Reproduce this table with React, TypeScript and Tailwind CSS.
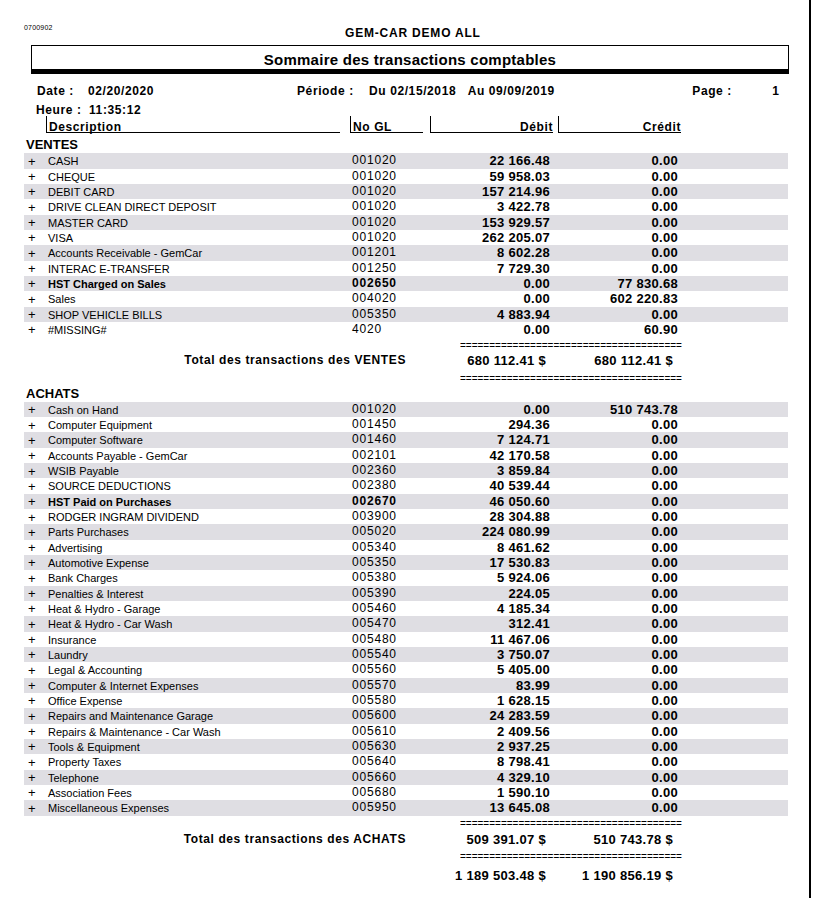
type Line = {
  desc: string;
  gl: string;
  debit: string;
  credit: string;
  bold?: boolean;
};

const ventes: Line[] = [
  { desc: 'CASH', gl: '001020', debit: '22 166.48', credit: '0.00' },
  { desc: 'CHEQUE', gl: '001020', debit: '59 958.03', credit: '0.00' },
  { desc: 'DEBIT CARD', gl: '001020', debit: '157 214.96', credit: '0.00' },
  { desc: 'DRIVE CLEAN DIRECT DEPOSIT', gl: '001020', debit: '3 422.78', credit: '0.00' },
  { desc: 'MASTER CARD', gl: '001020', debit: '153 929.57', credit: '0.00' },
  { desc: 'VISA', gl: '001020', debit: '262 205.07', credit: '0.00' },
  { desc: 'Accounts Receivable - GemCar', gl: '001201', debit: '8 602.28', credit: '0.00' },
  { desc: 'INTERAC E-TRANSFER', gl: '001250', debit: '7 729.30', credit: '0.00' },
  { desc: 'HST Charged on Sales', gl: '002650', debit: '0.00', credit: '77 830.68', bold: true },
  { desc: 'Sales', gl: '004020', debit: '0.00', credit: '602 220.83' },
  { desc: 'SHOP VEHICLE BILLS', gl: '005350', debit: '4 883.94', credit: '0.00' },
  { desc: '#MISSING#', gl: '4020', debit: '0.00', credit: '60.90' },
];

const achats: Line[] = [
  { desc: 'Cash on Hand', gl: '001020', debit: '0.00', credit: '510 743.78' },
  { desc: 'Computer Equipment', gl: '001450', debit: '294.36', credit: '0.00' },
  { desc: 'Computer Software', gl: '001460', debit: '7 124.71', credit: '0.00' },
  { desc: 'Accounts Payable - GemCar', gl: '002101', debit: '42 170.58', credit: '0.00' },
  { desc: 'WSIB Payable', gl: '002360', debit: '3 859.84', credit: '0.00' },
  { desc: 'SOURCE DEDUCTIONS', gl: '002380', debit: '40 539.44', credit: '0.00' },
  { desc: 'HST Paid on Purchases', gl: '002670', debit: '46 050.60', credit: '0.00', bold: true },
  { desc: 'RODGER INGRAM DIVIDEND', gl: '003900', debit: '28 304.88', credit: '0.00' },
  { desc: 'Parts Purchases', gl: '005020', debit: '224 080.99', credit: '0.00' },
  { desc: 'Advertising', gl: '005340', debit: '8 461.62', credit: '0.00' },
  { desc: 'Automotive Expense', gl: '005350', debit: '17 530.83', credit: '0.00' },
  { desc: 'Bank Charges', gl: '005380', debit: '5 924.06', credit: '0.00' },
  { desc: 'Penalties & Interest', gl: '005390', debit: '224.05', credit: '0.00' },
  { desc: 'Heat & Hydro - Garage', gl: '005460', debit: '4 185.34', credit: '0.00' },
  { desc: 'Heat & Hydro - Car Wash', gl: '005470', debit: '312.41', credit: '0.00' },
  { desc: 'Insurance', gl: '005480', debit: '11 467.06', credit: '0.00' },
  { desc: 'Laundry', gl: '005540', debit: '3 750.07', credit: '0.00' },
  { desc: 'Legal & Accounting', gl: '005560', debit: '5 405.00', credit: '0.00' },
  { desc: 'Computer & Internet Expenses', gl: '005570', debit: '83.99', credit: '0.00' },
  { desc: 'Office Expense', gl: '005580', debit: '1 628.15', credit: '0.00' },
  { desc: 'Repairs and Maintenance Garage', gl: '005600', debit: '24 283.59', credit: '0.00' },
  { desc: 'Repairs & Maintenance - Car Wash', gl: '005610', debit: '2 409.56', credit: '0.00' },
  { desc: 'Tools & Equipment', gl: '005630', debit: '2 937.25', credit: '0.00' },
  { desc: 'Property Taxes', gl: '005640', debit: '8 798.41', credit: '0.00' },
  { desc: 'Telephone', gl: '005660', debit: '4 329.10', credit: '0.00' },
  { desc: 'Association Fees', gl: '005680', debit: '1 590.10', credit: '0.00' },
  { desc: 'Miscellaneous Expenses', gl: '005950', debit: '13 645.08', credit: '0.00' },
];

const EQUALS = '='.repeat(38);

// ligne de détail, une bande grise sur deux
function Row({ line, shaded }: { line: Line; shaded: boolean }) {
  return (
    <div className={`ml-[24px] w-[764px] h-[15.33px] flex items-start ${shaded ? 'bg-[#dfdee3]' : ''}`}>
      <span className="w-[24px] pl-[4px] pt-[0.5px] text-[13px] leading-[15.33px]">+</span>
      <span className={`w-[304px] pt-[1px] text-[11px] leading-[15.33px] whitespace-nowrap ${line.bold ? 'font-bold' : ''}`}>
        {line.desc}
      </span>
      <span className={`w-[100px] text-[12px] leading-[15.33px] tracking-[0.8px] ${line.bold ? 'font-bold' : ''}`}>
        {line.gl}
      </span>
      <span className="w-[98px] text-right text-[13px] font-bold leading-[15.33px] tracking-[0.3px] whitespace-nowrap">
        {line.debit}
      </span>
      <span className="w-[128px] text-right text-[13px] font-bold leading-[15.33px] tracking-[0.3px] whitespace-nowrap">
        {line.credit}
      </span>
    </div>
  );
}

function Equals() {
  return (
    <div className="ml-[460px] w-[224px] h-[10px] overflow-hidden text-[10px] leading-[10px] whitespace-nowrap">
      {EQUALS}
    </div>
  );
}

function Totals({ label, debit, credit }: { label: string; debit: string; credit: string }) {
  return (
    <div className="flex items-start h-[16px]">
      <span className="w-[406px] text-right text-[12px] font-bold leading-[14px] tracking-[0.6px] whitespace-nowrap">
        {label}
      </span>
      <span className="w-[140px] text-right text-[13px] font-bold leading-[16px] tracking-[0.3px] whitespace-nowrap">
        {debit}
      </span>
      <span className="w-[127px] text-right text-[13px] font-bold leading-[16px] tracking-[0.3px] whitespace-nowrap">
        {credit}
      </span>
    </div>
  );
}

export default function App() {
  return (
    <div className="w-[817px] h-[898px] bg-white text-black font-['Liberation_Sans',Arial,sans-serif] overflow-hidden">
      <div className="w-[811px] h-[898px] border-r-2 border-black">
        {/* En-tête */}
        <div className="flex items-start pt-[24px] h-[40px]">
          <span className="w-[345px] pl-[24px] text-[7px] leading-[8px] tracking-[0.2px]">0700902</span>
          <span className="mt-[2px] text-[12px] font-bold leading-[14px] tracking-[0.8px]">GEM-CAR DEMO ALL</span>
        </div>

        <div className="mt-[5px] ml-[31px] w-[758px] h-[29px] border border-b-[5px] border-black pt-[5px] text-center text-[15px] font-bold leading-[18px] tracking-[0.25px]">
          Sommaire des transactions comptables
        </div>

        <div className="mt-[10px] ml-[37px] flex h-[14px] text-[12px] font-bold leading-[14px] tracking-[0.6px] whitespace-nowrap">
          <span className="w-[51px]">Date :</span>
          <span className="w-[209px]">02/20/2020</span>
          <span className="w-[72px]">Période :</span>
          <span className="w-[98.7px]">Du 02/15/2018</span>
          <span className="w-[224.6px]">Au 09/09/2019</span>
          <span className="w-[80px]">Page :</span>
          <span>1</span>
        </div>
        <div className="mt-[5px] ml-[36px] flex h-[13px] text-[12px] font-bold leading-[14px] tracking-[0.6px] whitespace-nowrap">
          <span className="w-[53px]">Heure :</span>
          <span>11:35:12</span>
        </div>

        {/* Colonnes */}
        <div className="ml-[46px] flex h-[17px] text-[12px] font-bold leading-[14px] tracking-[0.6px]">
          <div className="w-[294px] h-[17px] border-l border-b border-black pl-[2px] pt-[3.5px]">Description</div>
          <div className="w-[10px]" />
          <div className="w-[73px] h-[17px] border-l border-b border-black pl-[2px] pt-[3.5px]">No GL</div>
          <div className="w-[7px]" />
          <div className="w-[123px] h-[17px] border-l border-b border-black text-right pt-[3.5px]">Débit</div>
          <div className="w-[5px]" />
          <div className="w-[123px] h-[17px] border-l border-b border-black text-right pt-[3.5px]">Crédit</div>
        </div>

        {/* VENTES */}
        <div className="h-[20.3px] pl-[26px] pt-[3.5px] text-[13px] font-bold leading-[16px]">VENTES</div>
        {ventes.map((l, i) => (
          <Row key={l.desc} line={l} shaded={i % 2 === 0} />
        ))}
        <div className="mt-[3.3px]">
          <Equals />
        </div>
        <div className="mt-[2.7px]">
          <Totals label="Total des transactions des VENTES" debit="680 112.41 $" credit="680 112.41 $" />
        </div>
        <div className="mt-[4.3px]">
          <Equals />
        </div>

        {/* ACHATS */}
        <div className="h-[18.2px] pl-[26px] pt-[2px] text-[13px] font-bold leading-[16px]">ACHATS</div>
        {achats.map((l, i) => (
          <Row key={l.desc} line={l} shaded={i % 2 === 0} />
        ))}
        <div className="mt-[3.3px]">
          <Equals />
        </div>
        <div className="mt-[2.7px]">
          <Totals label="Total des transactions des ACHATS" debit="509 391.07 $" credit="510 743.78 $" />
        </div>
        <div className="mt-[4.3px]">
          <Equals />
        </div>
        <div className="mt-[5.7px]">
          <Totals label="" debit="1 189 503.48 $" credit="1 190 856.19 $" />
        </div>
      </div>
    </div>
  );
}
